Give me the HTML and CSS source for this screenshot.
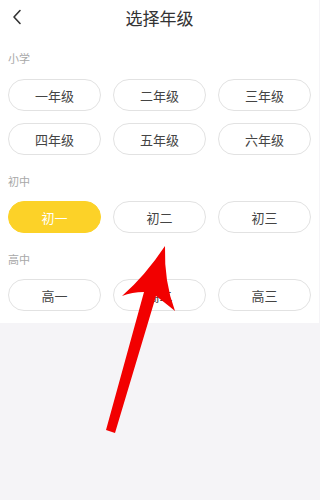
FILE: index.html
```html
<!DOCTYPE html>
<html lang="zh">
<head>
<meta charset="utf-8">
<link rel="stylesheet" href="styles.css">
</head>
<body>
<div class="page">
  <div class="sheet">
    <div class="header">
      <svg class="back" width="10" height="16" viewBox="0 0 10 16"><path d="M8 1.5 L2 8 L8 14.5" fill="none" stroke="#333" stroke-width="1.6" stroke-linecap="round" stroke-linejoin="round"/></svg>
      <div class="title">选择年级</div>
    </div>
    <div class="label first">小学</div>
    <div class="grid">
      <div class="btn">一年级</div>
      <div class="btn">二年级</div>
      <div class="btn">三年级</div>
      <div class="btn">四年级</div>
      <div class="btn">五年级</div>
      <div class="btn">六年级</div>
    </div>
    <div class="label">初中</div>
    <div class="grid">
      <div class="btn active">初一</div>
      <div class="btn">初二</div>
      <div class="btn">初三</div>
    </div>
    <div class="label">高中</div>
    <div class="grid">
      <div class="btn">高一</div>
      <div class="btn">高二</div>
      <div class="btn">高三</div>
    </div>
  </div>
  <svg class="arrow" width="319" height="500" viewBox="0 0 319 500">
    <path d="M165 246 Q164 282 175 311 Q164 302 156 296 L115 433 L106 430 L144 292 Q132 292 122 296 Q145 276 165 246 Z" fill="#f20000"/>
  </svg>
</div>
</body>
</html>
```

FILE: styles.css
```css
html, body {
  margin: 0;
  padding: 0;
}
body {
  width: 319px;
  height: 500px;
  background: #f5f4f7;
  font-family: "Noto Sans CJK SC", "Noto Sans", sans-serif;
  overflow: hidden;
}
.page {
  position: relative;
  width: 319px;
  height: 500px;
}
.sheet {
  background: #fff;
  padding: 0 8px 12px 8px;
}
.header {
  height: 36px;
  display: flex;
  align-items: center;
  justify-content: center;
  position: relative;
}
.back {
  position: absolute;
  left: 4px;
  top: 9px;
}
.title {
  font-size: 17px;
  color: #333;
  line-height: 36px;
}
.label {
  font-size: 11px;
  line-height: 12px;
  color: #a8a8a8;
  margin-top: 20px;
  margin-bottom: 14px;
}
.label.first {
  margin-top: 16px;
  margin-bottom: 15px;
}
.grid {
  display: grid;
  grid-template-columns: repeat(3, 1fr);
  column-gap: 12px;
  row-gap: 12px;
}
.btn {
  height: 30px;
  border: 1px solid #e2e2e2;
  border-radius: 16px;
  display: flex;
  align-items: center;
  justify-content: center;
  font-size: 13px;
  color: #444;
}
.btn.active {
  background: #fcd228;
  border-color: #fcd228;
  color: #fff;
}
.arrow {
  position: absolute;
  left: 0;
  top: 0;
  pointer-events: none;
}
```
